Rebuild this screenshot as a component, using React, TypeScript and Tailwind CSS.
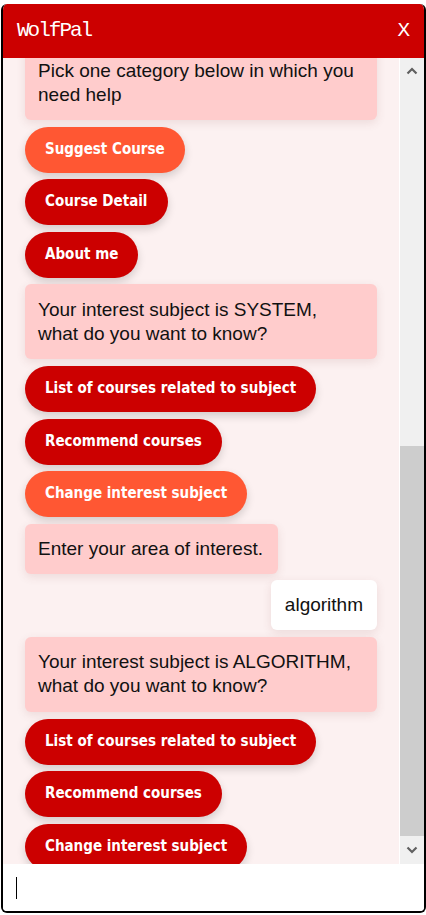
import React from "react";

const Bubble = ({ children, single }: { children: React.ReactNode; single?: boolean }) => (
  <div
    className={
      "self-start max-w-full rounded-[6px] bg-[#ffcccc] pl-[13px] pr-[15px] text-[19px] leading-[24px] text-[#111] shadow-[0_3px_10px_rgba(120,60,60,0.12)] " +
      (single ? "py-[13px]" : "py-[13.5px]")
    }
  >
    {children}
  </div>
);

const Btn = ({ children, orange }: { children: React.ReactNode; orange?: boolean }) => (
  <div
    className={
      "self-start flex h-[46px] items-center rounded-full px-[20px] pb-[1px] text-[15px] font-bold text-white shadow-[0_4px_9px_rgba(0,0,0,0.16)] " +
      (orange ? "bg-[#ff5733]" : "bg-[#cc0000]")
    }
    style={{ fontFamily: '"DejaVu Sans Condensed", "DejaVu Sans", Verdana, sans-serif' }}
  >
    {children}
  </div>
);

export default function App() {
  return (
    <div className="w-[426px] h-[915px] bg-white pt-[4px] pl-[1px]" style={{ fontFamily: '"Liberation Sans", Arial, sans-serif' }}>
      <div className="flex h-[909px] w-[425px] flex-col overflow-hidden rounded-[6px] border-x-2 border-b-2 border-black">
        <div className="flex h-[54px] shrink-0 items-center justify-between bg-[#cc0000] pl-[14px] pr-[14px] text-white">
          <span className="text-[21px] tracking-[-2px]" style={{ fontFamily: '"Liberation Mono", "Courier New", monospace' }}>
            WolfPal
          </span>
          <span className="text-[21px]" style={{ fontFamily: '"Liberation Mono", "Courier New", monospace' }}>
            X
          </span>
        </div>
        <div className="flex h-[806px] shrink-0">
          <div className="relative flex-1 overflow-hidden bg-[#fcf1f1]">
            <div className="mt-[-13px] flex flex-col gap-[6.6px] pl-[22px] pr-[22px]">
              <Bubble>Pick one category below in which you need help</Bubble>
              <Btn orange>Suggest Course</Btn>
              <Btn>Course Detail</Btn>
              <Btn>About me</Btn>
              <Bubble>Your interest subject is SYSTEM, what do you want to know?</Bubble>
              <Btn>List of courses related to subject</Btn>
              <Btn>Recommend courses</Btn>
              <Btn orange>Change interest subject</Btn>
              <Bubble single>Enter your area of interest.</Bubble>
              <div className="self-end rounded-[6px] bg-white px-[14px] py-[13px] text-[19px] leading-[24px] text-[#111] shadow-[0_3px_10px_rgba(120,60,60,0.12)]">
                algorithm
              </div>
              <Bubble>Your interest subject is ALGORITHM, what do you want to know?</Bubble>
              <Btn>List of courses related to subject</Btn>
              <Btn>Recommend courses</Btn>
              <Btn>Change interest subject</Btn>
            </div>
          </div>
          <div className="w-px bg-white" />
          <div className="flex w-[24px] flex-col bg-[#f0f0f0]">
            <div className="flex h-[26px] items-center justify-center">
              <svg width="12" height="8" viewBox="0 0 12 8">
                <path d="M1.5 6.5 L6 2 L10.5 6.5" fill="none" stroke="#606060" strokeWidth="2.2" />
              </svg>
            </div>
            <div className="h-[362px]" />
            <div className="h-[390px] bg-[#cdcdcd]" />
            <div className="flex flex-1 items-center justify-center">
              <svg width="12" height="8" viewBox="0 0 12 8">
                <path d="M1.5 1.5 L6 6 L10.5 1.5" fill="none" stroke="#606060" strokeWidth="2.2" />
              </svg>
            </div>
          </div>
        </div>
        <div className="flex flex-1 items-center bg-white pl-[13px]">
          <div className="h-[22px] w-px bg-black" />
        </div>
      </div>
    </div>
  );
}
